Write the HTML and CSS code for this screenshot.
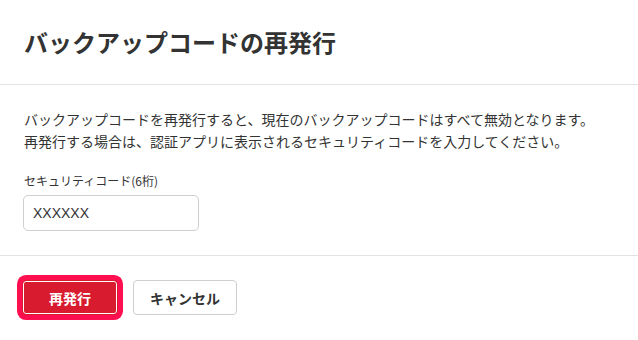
FILE: index.html
```html
<!DOCTYPE html>
<html lang="ja">
<head>
<meta charset="utf-8">
<link rel="stylesheet" href="styles.css">
</head>
<body>
<div class="modal">
  <header class="modal-header">
    <h1 class="modal-title">バックアップコードの再発行</h1>
  </header>
  <section class="modal-body">
    <p class="desc">バックアップコードを再発行すると、現在のバックアップコードはすべて無効となります。<br>再発行する場合は、認証アプリに表示されるセキュリティコードを入力してください。</p>
    <label class="field-label" for="code">セキュリティコード(6桁)</label>
    <input class="field-input" id="code" type="text" value="XXXXXX">
  </section>
  <footer class="modal-footer">
    <button class="btn btn-primary">再発行</button>
    <button class="btn btn-secondary">キャンセル</button>
  </footer>
</div>
</body>
</html>
```
FILE: styles.css
```css
html, body {
  margin: 0;
  padding: 0;
  background: #fff;
}
body {
  font-family: "Noto Sans CJK JP", "Noto Sans", "Liberation Sans", sans-serif;
  color: #333;
}
.modal {
  width: 638px;
  height: 340px;
  display: flex;
  flex-direction: column;
}
.modal-header {
  padding: 24px 24px 24px;
  border-bottom: 1px solid #e2e2e2;
}
.modal-title {
  margin: 0;
  font-size: 24px;
  line-height: 36px;
  font-weight: 700;
  color: #333;
}
.modal-body {
  padding: 23px 24px 24px;
  border-bottom: 1px solid #e2e2e2;
  display: flex;
  flex-direction: column;
  align-items: flex-start;
}
.desc {
  margin: 0 0 20px;
  font-size: 14px;
  line-height: 22px;
  color: #333;
}
.field-label {
  font-size: 12px;
  line-height: 18px;
  margin-bottom: 5px;
  color: #333;
}
.field-input {
  box-sizing: border-box;
  width: 176px;
  height: 36px;
  margin-left: -1px;
  border: 1px solid #cfcfcf;
  border-radius: 5px;
  padding: 0 9px;
  font-family: "Liberation Sans", "Noto Sans CJK JP", sans-serif;
  font-size: 14px;
  color: #333;
  outline: none;
}
.modal-footer {
  padding: 24px 23px;
  display: flex;
  gap: 15px;
  align-items: center;
}
.btn {
  box-sizing: border-box;
  height: 35px;
  border-radius: 4px;
  font-family: "Noto Sans CJK JP", sans-serif;
  font-size: 14px;
  font-weight: 700;
  cursor: pointer;
}
.btn-primary {
  width: 96px;
  margin-left: -1px;
  background: #d81b2f;
  color: #fff;
  border: 1px solid #d81b2f;
  box-shadow: inset 0 0 0 1px #fff, 0 0 0 5px #ff0f50;
  border-radius: 4px;
}
.btn-secondary {
  width: 104px;
  background: #fff;
  color: #333;
  border: 1px solid #cfcfcf;
}
```
